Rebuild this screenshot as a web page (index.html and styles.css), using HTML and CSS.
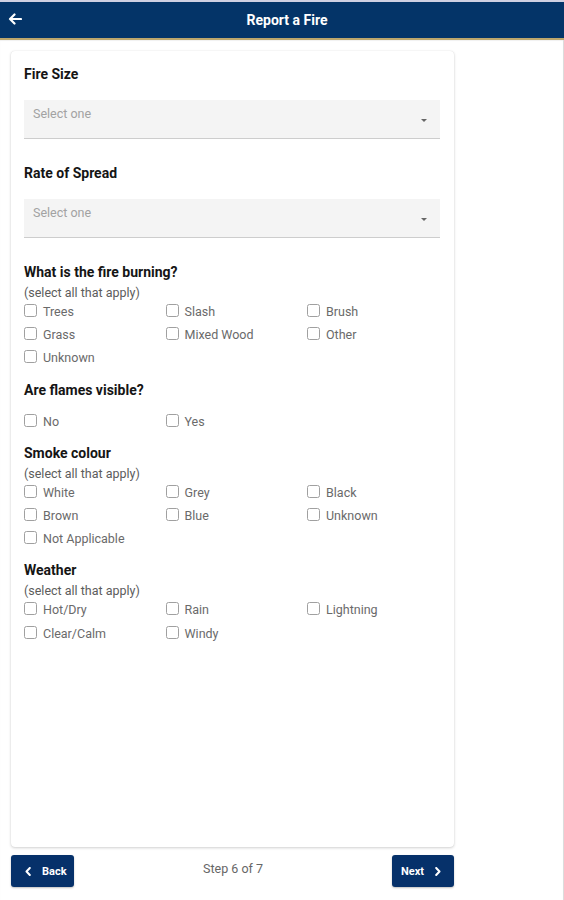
FILE: index.html
```html
<!DOCTYPE html>
<html lang="en">
<head>
<meta charset="utf-8">
<title>Report a Fire</title>
<link rel="stylesheet" href="styles.css">
</head>
<body>
<div class="topline"></div>
<header class="appbar">
  <span class="appbar-back">
    <svg width="14" height="12" viewBox="0 0 14 12"><path d="M13 6H2M6.5 1.5L2 6l4.5 4.5" fill="none" stroke="#fff" stroke-width="2.2" stroke-linecap="round" stroke-linejoin="round"/></svg>
  </span>
  <h1 class="appbar-title">Report a Fire</h1>
</header>
<main class="page">
  <section class="card">
    <h2 class="q">Fire Size</h2>
    <div class="select"><span class="placeholder">Select one</span><span class="caret"></span></div>

    <h2 class="q q-after-select">Rate of Spread</h2>
    <div class="select"><span class="placeholder">Select one</span><span class="caret"></span></div>

    <h2 class="q q-after-select">What is the fire burning?</h2>
    <p class="hint">(select all that apply)</p>
    <div class="checks">
      <label class="check"><input type="checkbox"><span>Trees</span></label>
      <label class="check"><input type="checkbox"><span>Slash</span></label>
      <label class="check"><input type="checkbox"><span>Brush</span></label>
      <label class="check"><input type="checkbox"><span>Grass</span></label>
      <label class="check"><input type="checkbox"><span>Mixed Wood</span></label>
      <label class="check"><input type="checkbox"><span>Other</span></label>
      <label class="check"><input type="checkbox"><span>Unknown</span></label>
    </div>

    <h2 class="q q-next">Are flames visible?</h2>
    <div class="checks checks-nohint">
      <label class="check"><input type="checkbox"><span>No</span></label>
      <label class="check"><input type="checkbox"><span>Yes</span></label>
    </div>

    <h2 class="q q-next">Smoke colour</h2>
    <p class="hint">(select all that apply)</p>
    <div class="checks">
      <label class="check"><input type="checkbox"><span>White</span></label>
      <label class="check"><input type="checkbox"><span>Grey</span></label>
      <label class="check"><input type="checkbox"><span>Black</span></label>
      <label class="check"><input type="checkbox"><span>Brown</span></label>
      <label class="check"><input type="checkbox"><span>Blue</span></label>
      <label class="check"><input type="checkbox"><span>Unknown</span></label>
      <label class="check"><input type="checkbox"><span>Not Applicable</span></label>
    </div>

    <h2 class="q q-next">Weather</h2>
    <p class="hint">(select all that apply)</p>
    <div class="checks">
      <label class="check"><input type="checkbox"><span>Hot/Dry</span></label>
      <label class="check"><input type="checkbox"><span>Rain</span></label>
      <label class="check"><input type="checkbox"><span>Lightning</span></label>
      <label class="check"><input type="checkbox"><span>Clear/Calm</span></label>
      <label class="check"><input type="checkbox"><span>Windy</span></label>
    </div>
  </section>

  <footer class="footer">
    <button class="btn btn-back" type="button">
      <svg width="6" height="9" viewBox="0 0 6 9"><path d="M4.8 1L1.5 4.5 4.8 8" fill="none" stroke="#fff" stroke-width="2" stroke-linecap="round" stroke-linejoin="round"/></svg>
      <span>Back</span>
    </button>
    <span class="step">Step 6 of 7</span>
    <button class="btn btn-next" type="button">
      <span>Next</span>
      <svg width="6" height="9" viewBox="0 0 6 9"><path d="M1.2 1L4.5 4.5 1.2 8" fill="none" stroke="#fff" stroke-width="2" stroke-linecap="round" stroke-linejoin="round"/></svg>
    </button>
  </footer>
</main>
</body>
</html>
```

FILE: styles.css
```css
* { box-sizing: border-box; }

html, body {
  margin: 0;
  padding: 0;
  background: #fff;
}

body {
  font-family: Roboto, "Liberation Sans", Arial, sans-serif;
  width: 564px;
  height: 900px;
  overflow: hidden;
}

.topline {
  height: 2px;
  background: #cfd0e2;
}

.appbar {
  height: 38px;
  background: #043468;
  border-bottom: 2px solid #bda66c;
  display: flex;
  align-items: center;
}

.appbar-back {
  width: 30px;
  padding-left: 8px;
  display: flex;
  align-items: center;
  margin-top: -3px;
}

.appbar-title {
  flex: 1;
  margin: 0;
  padding-right: 20px;
  text-align: center;
  color: #fff;
  font-size: 14px;
  font-weight: 700;
  line-height: 16px;
}

.page {
  width: 564px;
  height: 860px;
  border-right: 1px solid #dcdcdc;
  padding: 11px 0 13px 11px;
  display: flex;
  flex-direction: column;
  box-shadow: inset 0 1px 1px rgba(0,0,0,0.06);
}

.card {
  width: 443px;
  flex: 1;
  background: #fff;
  border-radius: 4px;
  box-shadow: 0 1px 3px rgba(0,0,0,0.18), 0 0 1px rgba(0,0,0,0.12);
  padding: 15px 14px 0 13px;
}

.q {
  margin: 0;
  font-size: 14px;
  line-height: 16px;
  font-weight: 700;
  color: #151515;
}

.q-after-select { margin-top: 26px; }
.q-next { margin-top: 12px; }

.select {
  margin-top: 18px;
  height: 39px;
  background: #f4f4f4;
  border-bottom: 1.5px solid #cdcdcd;
  display: flex;
  justify-content: space-between;
  align-items: flex-start;
  padding: 7px 13px 0 9px;
}

.placeholder {
  font-size: 12.5px;
  line-height: 13px;
  color: #a2a2a2;
}

.caret {
  margin-top: 12px;
  width: 0;
  height: 0;
  border-left: 3.5px solid transparent;
  border-right: 3.5px solid transparent;
  border-top: 3.5px solid #666;
}

.hint {
  margin: 6px 0 0;
  font-size: 12.5px;
  line-height: 14px;
  color: #5c5c5c;
}

.checks {
  display: grid;
  grid-template-columns: repeat(3, 141.5px);
  grid-auto-rows: 23.2px;
}

.checks-nohint { margin-top: 12px; }

.check {
  display: flex;
  align-items: center;
  gap: 6px;
  font-size: 12.5px;
  color: #6a6a6a;
}

.check input {
  appearance: none;
  -webkit-appearance: none;
  margin: 0;
  width: 13px;
  height: 13px;
  border: 1.5px solid #a0a0a0;
  border-radius: 2.5px;
  background: #fff;
  flex: none;
  position: relative;
  top: -1px;
}

.footer {
  width: 443px;
  margin-top: 8px;
  height: 32px;
  display: flex;
  justify-content: space-between;
  align-items: flex-start;
}

.btn {
  height: 32px;
  border: none;
  border-radius: 3px;
  background: #06316a;
  color: #fff;
  font-family: inherit;
  font-size: 11px;
  font-weight: 700;
  display: flex;
  align-items: center;
  box-shadow: 0 1px 2px rgba(0,0,0,0.25);
  cursor: pointer;
}

.btn-back {
  width: 63px;
  padding: 0 0 0 14px;
  gap: 11px;
}

.btn-next {
  width: 62px;
  padding: 0 0 0 9px;
  gap: 11px;
}

.step {
  padding-top: 6px;
  font-size: 12.5px;
  line-height: 15px;
  color: #666;
}
```
